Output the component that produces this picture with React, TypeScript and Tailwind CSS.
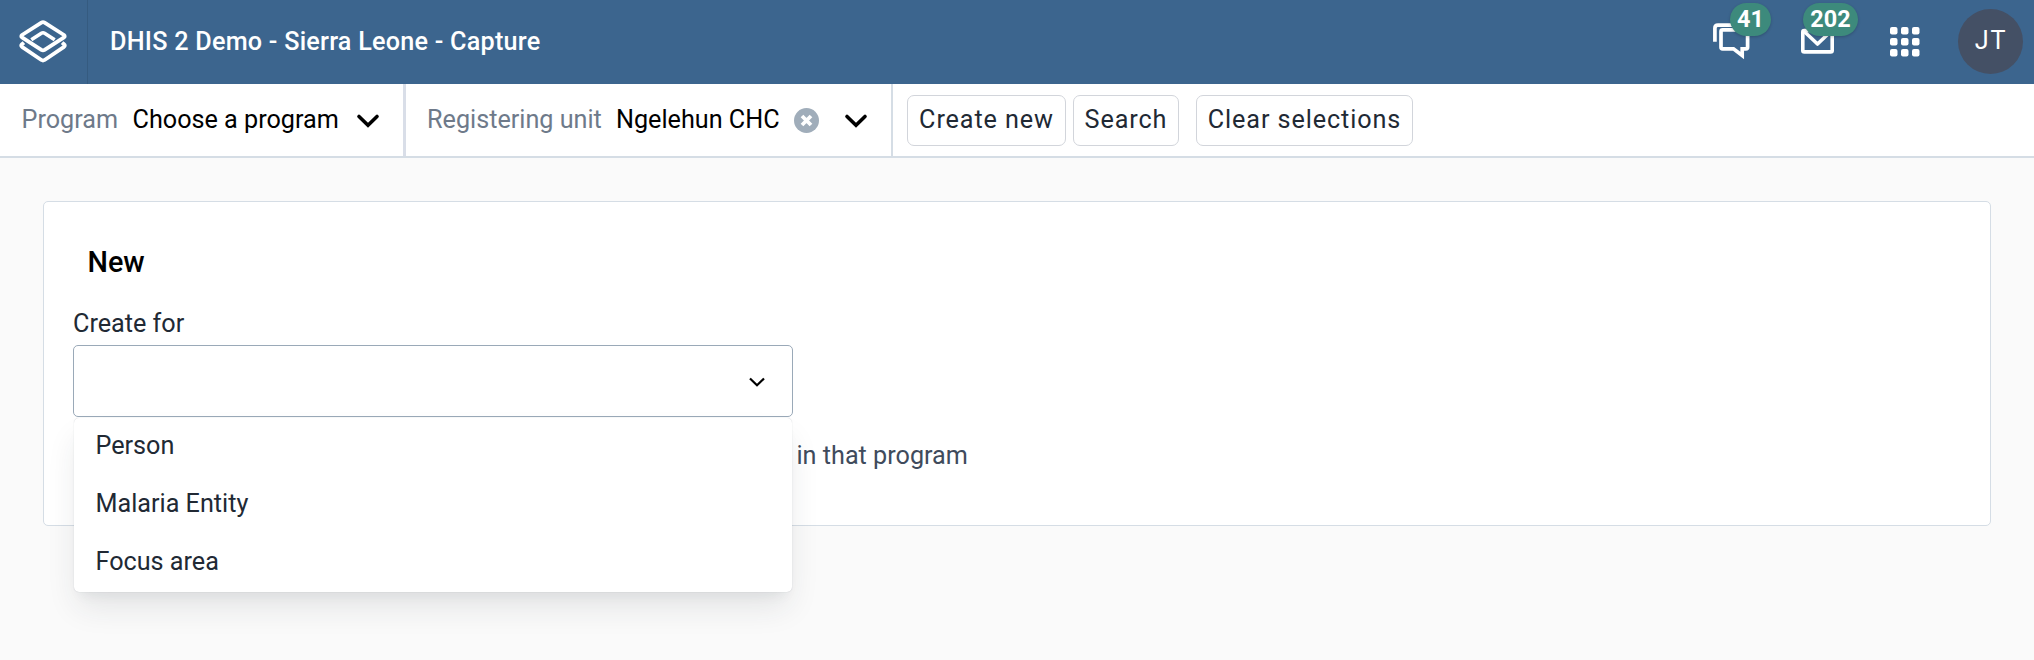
import React from "react";

function Logo() {
  return (
    <svg width="48" height="44" viewBox="0 0 48 44" fill="none" stroke="#fff" strokeWidth="3.8" strokeLinejoin="round" strokeLinecap="butt">
      <path d="M22.4 2.6 Q24 1.6 25.6 2.6 L45 15 Q46.4 16.1 45 17.3 L25.6 29.9 Q24 30.9 22.4 29.9 L3 17.3 Q1.6 16.1 3 15 Z" />
      <path d="M12.3 19.8 L22.4 13.2 Q24 12.2 25.6 13.2 L35.7 19.8" strokeWidth="3.6" />
      <path d="M4.9 22.6 L3 24.2 Q1.4 25.600 3 26.9 L22.4 40 Q24 41 25.6 40 L45 26.9 Q46.6 25.600 45 24.2 L43.1 22.6" />
    </svg>
  );
}

function Chevron() {
  return (
    <svg className="mt-0.5" width="24" height="16" viewBox="0 0 24 16" fill="none" stroke="#000" strokeWidth="3.6" strokeLinecap="round" strokeLinejoin="miter">
      <path d="M3 3.5 L12 12.2 L21 3.5" />
    </svg>
  );
}

function Badge({ className, children }: { className: string; children: React.ReactNode }) {
  return (
    <span className={`absolute top-[3px] flex h-[33px] items-center justify-center rounded-full bg-[#3d8a7c] pt-px text-[23.4px] font-bold leading-none shadow-[0_1px_3px_rgba(0,0,0,0.2)] ${className}`}>
      {children}
    </span>
  );
}

function Header() {
  return (
    <header className="flex h-[84px] items-center bg-[#3c658e] text-white">
      <div className="flex h-full w-[88px] items-center border-r border-[#355b80] pl-[19px]">
        <Logo />
      </div>
      <h1 className="flex-1 pl-[22px] text-[25.2px] font-medium leading-none tracking-[0.24px]">
        DHIS 2 Demo - Sierra Leone - Capture
      </h1>
      <div className="relative h-full w-[88px]">
        <svg className="mt-[22px]" width="40" height="40" viewBox="0 0 40 40" fill="none" stroke="#fff" strokeWidth="3.7">
          <path d="M1.900 19.700 V6.300 Q1.900 3.200 5 3.200 H33" />
          <path d="M9.600 7.900 H33 Q34.600 7.900 34.600 9.500 V25.200 Q34.600 26.800 33 26.800 H29.200 V33.500 L20.500 26.800 H9.600 Q8 26.800 8 25.200 V9.500 Q8 7.900 9.600 7.900 Z" />
        </svg>
        <Badge className="left-[17px] w-[41px]">41</Badge>
      </div>
      <div className="relative h-full w-[89px]">
        <svg className="mt-[26px]" width="34" height="30" viewBox="0 0 34 30" fill="none" stroke="#fff" strokeWidth="3.6" strokeLinejoin="round">
          <path d="M1.800 6 Q1.800 4.500 3.300 4.500 H29.700 Q31.200 4.500 31.200 6 V24.400 Q31.200 25.900 29.700 25.900 H3.300 Q1.800 25.900 1.800 24.400 Z" />
          <path d="M2.500 4.700 L16.500 18 L30.500 4.700" />
        </svg>
        <Badge className="left-[2px] w-[55px]">202</Badge>
      </div>
      <svg width="30" height="30" viewBox="0 0 30 30" fill="#fff">
        {[0, 11, 22].map((y) =>
          [0, 11, 22].map((x) => <rect key={`${x}-${y}`} x={x} y={y} width="7.500" height="7.500" rx="2" />)
        )}
      </svg>
      <div className="-mt-0.5 ml-[38px] mr-[11px] flex h-[65px] w-[65px] items-center justify-center rounded-full bg-[#445065] pl-px text-[25.2px] leading-none tracking-[1.8px]">
        JT
      </div>
    </header>
  );
}

function BarButton({ className, children }: { className: string; children: React.ReactNode }) {
  return (
    <button className={`flex h-[51px] items-center justify-center rounded-[7px] border border-[#d2d5db] bg-white pb-px text-[25.2px] leading-none tracking-[0.9px] text-[#212934] ${className}`}>
      {children}
    </button>
  );
}

function SelectorBar() {
  return (
    <div className="flex h-[74px] border-b-2 border-[#d5dde5] bg-white text-[25.2px] leading-none">
      <div className="flex w-[406px] items-center border-r-[3px] border-[#d9dee8] pl-[21.500px]">
        <span className="w-[111px] text-[#6e7a8a]">Program</span>
        <span className="w-[223px] text-black">Choose a program</span>
        <Chevron />
      </div>
      <div className="flex w-[487px] items-center border-r-2 border-[#d5dde5] pl-[21px]">
        <span className="w-[189px] text-[#6e7a8a]">Registering unit</span>
        <span className="w-[178px] text-black">Ngelehun CHC</span>
        <svg className="mr-[25px]" width="25" height="25" viewBox="0 0 25 25">
          <circle cx="12.5" cy="12.5" r="12.5" fill="#a0adba" />
          <path d="M8 8 L17 17 M17 8 L8 17" stroke="#fff" strokeWidth="3.8" />
        </svg>
        <Chevron />
      </div>
      <div className="flex items-center pl-3.5">
        <BarButton className="w-[159px]">Create new</BarButton>
        <BarButton className="ml-[7px] w-[106px]">Search</BarButton>
        <BarButton className="ml-[17px] w-[217px]">Clear selections</BarButton>
      </div>
    </div>
  );
}

const options = ["Person", "Malaria Entity", "Focus area"];

export default function App() {
  return (
    <div className="h-[660px] w-[2034px] overflow-hidden bg-[#fafafa] font-['Roboto',sans-serif]">
      <Header />
      <SelectorBar />
      <main className="px-[43px] pt-[43px]">
        <section className="h-[325px] rounded-[5px] border border-[#d5dde5] bg-white px-[29px] pt-[43px]">
          <h2 className="pl-[14.500px] text-[28.8px] font-medium leading-[34px] text-black">New</h2>
          <label className="mt-[30px] block text-[25.2px] leading-[30px] text-[#212934]">Create for</label>
          <div className="relative mt-[6px] w-[720px]">
            <div className="flex h-[72px] items-center justify-end rounded-[5px] border border-[#9aa9b8] bg-white pt-px pr-[26px]">
              <svg width="18" height="12" viewBox="0 0 18 12" fill="none" stroke="#000" strokeWidth="2.2">
                <path d="M2 2.500 L9 9.300 L16 2.500" />
              </svg>
            </div>
            <ul className="absolute top-[73px] left-px z-10 w-[718px] rounded-[5px] bg-white text-[25.2px] text-[#212934] shadow-[0_0_1px_rgba(60,70,85,0.3),0_18px_32px_-4px_rgba(33,41,52,0.11),0_8px_12px_-6px_rgba(33,41,52,0.07)]">
              {options.map((o) => (
                <li key={o} className="flex h-[58px] items-center pb-0.5 pl-[21.500px] leading-none">{o}</li>
              ))}
            </ul>
          </div>
          <p className="mt-[24px] pl-[723.500px] text-[25.2px] leading-[30px] text-[#404b5c]">in that program</p>
        </section>
      </main>
    </div>
  );
}
